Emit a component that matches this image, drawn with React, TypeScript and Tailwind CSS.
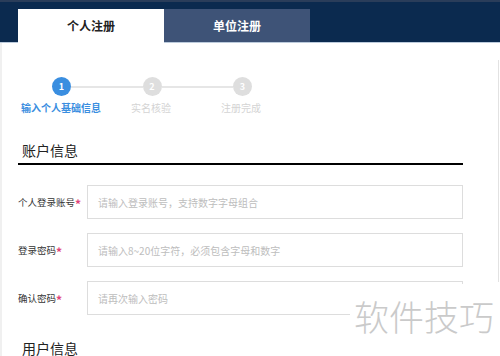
const font = { fontFamily: '"Noto Sans CJK SC", "Noto Sans", sans-serif' };

const steps = [
  { n: 1, label: "输入个人基础信息", active: true },
  { n: 2, label: "实名核验", active: false },
  { n: 3, label: "注册完成", active: false },
];

const fields = [
  { label: "个人登录账号", placeholder: "请输入登录账号，支持数字字母组合" },
  { label: "登录密码", placeholder: "请输入8~20位字符，必须包含字母和数字" },
  { label: "确认密码", placeholder: "请再次输入密码" },
];

function Circle({ n, active }: { n: number; active: boolean }) {
  return (
    <div
      className={`w-[19px] h-[19px] rounded-full flex items-center justify-center text-[9px] font-bold text-white shrink-0 ${
        active ? "bg-[#3a8ee0]" : "bg-[#dedede]"
      }`}
    >
      {n}
    </div>
  );
}

export default function App() {
  return (
    <div className="w-[500px] h-[356px] overflow-hidden bg-white relative" style={font}>
      {/* Header */}
      <div className="h-[43px] bg-[#0b2a4f] border-t-2 border-[#2a3d5a] border-b border-b-[#bccbdc] flex items-end pl-[18px]">
        <div className="w-[146px] h-[34px] -mb-px bg-white flex items-center justify-center text-[12px] font-bold text-[#222]">
          个人注册
        </div>
        <div className="w-[146px] h-[33px] bg-[#3e5377] flex items-center justify-center text-[12px] font-bold text-white">
          单位注册
        </div>
      </div>

      {/* Body */}
      <div className="flex border-l-2 border-[#f0f0f0]">
        <div className="w-[496px]">
          {/* Steps */}
          <div className="pl-[50px] pt-[34px] w-[300px]">
            <div className="flex items-center w-[200px]">
              <Circle n={1} active />
              <div className="flex-1 h-[2px] bg-[#e6e6e6]" />
              <Circle n={2} active={false} />
              <div className="flex-1 h-[2px] bg-[#e6e6e6]" />
              <Circle n={3} active={false} />
            </div>
          </div>
          <div className="flex pl-[14px] mt-[5px]">
            {steps.map((s) => (
              <div
                key={s.n}
                className={`w-[90px] text-center text-[10px] leading-[14px] ${
                  s.active ? "text-[#3a8ee0] font-bold" : "text-[#d4d4d4]"
                }`}
              >
                {s.label}
              </div>
            ))}
          </div>

          {/* 账户信息 */}
          <div className="ml-[16px] mr-[35px] mt-[26px] border-b-2 border-black pb-[4px]">
            <div className="pl-[4px] text-[14px] leading-[18px] text-[#222]">账户信息</div>
          </div>

          <div className="ml-[16px] mt-[20px] flex flex-col gap-[14px]">
            {fields.map((f) => (
              <div key={f.label} className="flex items-center">
                <div className="w-[69px] text-[9.5px] text-[#333] whitespace-nowrap flex items-center">
                  {f.label}
                  <span className="text-[#e0457b] text-[12px] leading-none relative top-[2px] font-bold">*</span>
                </div>
                <div className="w-[376px] h-[34px] border border-[#dddddd] flex items-center pl-[10px] text-[10px] text-[#bdbdbd]">
                  {f.placeholder}
                </div>
              </div>
            ))}
          </div>

          <div className="ml-[20px] mt-[24px] text-[14px] leading-[18px] text-[#222]">用户信息</div>
        </div>
        <div className="w-px h-[222px] mt-[17px] bg-[#e2e2e2]" />
      </div>

      {/* Watermark */}
      <div className="absolute left-[350px] top-[284px] w-[150px] h-[72px] bg-white flex items-start pl-[4px] pt-[12px]">
        <span className="text-[35px] leading-[40px] font-light text-[#cacaca]">软件技巧</span>
      </div>
    </div>
  );
}
